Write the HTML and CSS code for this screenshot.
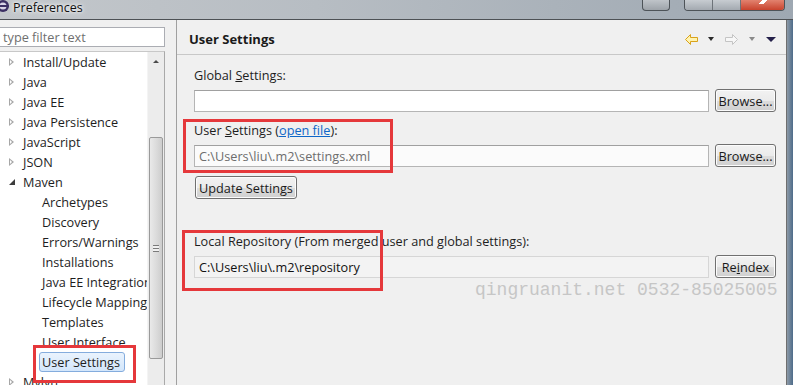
FILE: index.html
```html
<!DOCTYPE html>
<html lang="en">
<head>
  <meta charset="UTF-8">
  <title>Preferences</title>
  <link rel="stylesheet" href="styles.css">
</head>
<body>
<div class="window">
  <div class="titlebar">
    <svg class="app-icon" width="10" height="14" viewBox="0 0 10 14">
      <circle cx="3" cy="6" r="6" fill="#3b2f63"/>
      <circle cx="3" cy="6" r="3.5" fill="#d8d4e6"/>
      <rect x="-3" y="5" width="12" height="2" fill="#3b2f63"/>
    </svg>
    <span class="title">Preferences</span>
    <div class="caption">
      <span class="cap cap-extra"></span>
      <span class="cap-group">
        <span class="cap cap-min"></span>
        <span class="cap cap-max"></span>
        <span class="cap cap-close"><span class="x-mark"></span></span>
      </span>
    </div>
  </div>

  <div class="main">
    <aside class="sidebar">
      <input class="filter" type="text" placeholder="type filter text">
      <div class="tree">
        <ul class="tree-list">
          <li class="node"><span class="twisty"></span>Install/Update</li>
          <li class="node"><span class="twisty"></span>Java</li>
          <li class="node"><span class="twisty"></span>Java EE</li>
          <li class="node"><span class="twisty"></span>Java Persistence</li>
          <li class="node"><span class="twisty"></span>JavaScript</li>
          <li class="node"><span class="twisty"></span>JSON</li>
          <li class="node"><span class="twisty open"></span>Maven</li>
          <li class="leaf">Archetypes</li>
          <li class="leaf">Discovery</li>
          <li class="leaf">Errors/Warnings</li>
          <li class="leaf">Installations</li>
          <li class="leaf">Java EE Integration</li>
          <li class="leaf">Lifecycle Mapping</li>
          <li class="leaf">Templates</li>
          <li class="leaf">User Interface</li>
          <li class="leaf"><span class="selected">User Settings</span></li>
          <li class="node"><span class="twisty"></span>Mylyn</li>
        </ul>
        <div class="scrollbar">
          <span class="arrow-up"></span>
          <div class="thumb"><span class="grip"></span></div>
        </div>
      </div>
    </aside>

    <main class="page">
      <header class="page-head">
        <h1>User Settings</h1>
        <div class="nav">
          <svg width="13" height="11" viewBox="0 0 13 11"><path d="M0.5 5.5 L5.5 0.5 L5.5 3.5 L12.5 3.5 L12.5 7.5 L5.5 7.5 L5.5 10.5 Z" fill="#fff3b0" stroke="#d9a21b"/></svg>
          <span class="drop dark"></span>
          <svg class="fwd" width="13" height="11" viewBox="0 0 13 11"><path d="M12.5 5.5 L7.5 0.5 L7.5 3.5 L0.5 3.5 L0.5 7.5 L7.5 7.5 L7.5 10.5 Z" fill="#f7f7f7" stroke="#c4c4c4"/></svg>
          <span class="drop grey"></span>
          <span class="drop menu"></span>
        </div>
      </header>

      <div class="page-body">
        <label class="field-label">Global <u>S</u>ettings:</label>
        <div class="field-row">
          <input class="text" type="text">
          <button class="btn">Browse...</button>
        </div>

        <label class="field-label gap-s">User <u>S</u>ettings (<a href="#">open file</a>):</label>
        <div class="field-row">
          <input class="text muted" type="text" value="C:\Users\liu\.m2\settings.xml">
          <button class="btn">Browse...</button>
        </div>
        <button class="btn btn-update">Update Settings</button>

        <label class="field-label gap-l">Local Repository (From merged user and global settings):</label>
        <div class="field-row">
          <input class="text readonly" type="text" value="C:\Users\liu\.m2\repository" readonly>
          <button class="btn">Re<u>i</u>ndex</button>
        </div>
      </div>
    </main>
    <div class="frame-edge"></div>
  </div>

  <div class="watermark">qingruanit.net 0532-85025005</div>
  <div class="mark mark-user"></div>
  <div class="mark mark-repo"></div>
  <div class="mark mark-tree"></div>
</div>
</body>
</html>
```

FILE: styles.css
```css
body {
  margin: 0;
  font-family: "Open Sans", "Liberation Sans", sans-serif;
  font-size: 12.7px;
  color: #1e1e1e;
  overflow: hidden;
}

.window {
  position: relative;
  width: 793px;
  height: 385px;
  display: flex;
  flex-direction: column;
  background: #f0f0f0;
  overflow: hidden;
}

/* title bar */
.titlebar {
  height: 19px;
  display: flex;
  align-items: flex-start;
  background: linear-gradient(90deg, #c3c7cb 0%, #b7bdc3 40%, #aab2ba 70%, #9ea8b2 100%);
  border-bottom: 1px solid #4d5155;
  flex-shrink: 0;
}

.title {
  margin-left: 3px;
  line-height: 16px;
  font-size: 12.5px;
  color: #111;
  text-shadow: 0 0 6px #fff, 0 0 3px #fff;
}

.caption {
  margin-left: auto;
  display: flex;
  align-items: flex-start;
  margin-right: 8px;
}

.cap {
  display: block;
  height: 10px;
}

.cap-extra {
  width: 26px;
  margin-right: 14px;
  border: 1px solid #4d5358;
  border-top: none;
  border-radius: 0 0 4px 4px;
  background: linear-gradient(#bfc4c9, #9da3a9);
}

.cap-group {
  display: flex;
  border: 1px solid #4d5358;
  border-top: none;
  border-radius: 0 0 4px 4px;
  overflow: hidden;
}

.cap-min,
.cap-max {
  width: 27px;
  background: linear-gradient(#c7ccd1, #a3a9b0);
  border-right: 1px solid #6d7379;
}

.cap-close {
  width: 43px;
  background: linear-gradient(#e2826f, #c8432e);
  display: flex;
  justify-content: center;
}

.x-mark {
  width: 10px;
  height: 4px;
  background: linear-gradient(135deg, transparent 35%, #fff 35%, #fff 65%, transparent 65%);
}

/* main area */
.main {
  flex: 1;
  display: flex;
  min-height: 0;
}

.sidebar {
  width: 176px;
  flex-shrink: 0;
  display: flex;
  flex-direction: column;
  padding-top: 7px;
  box-sizing: border-box;
}

.filter {
  width: 165px;
  height: 20px;
  box-sizing: border-box;
  margin: 0 0 4px 0;
  padding: 0 3px;
  border: 1px solid #abadb3;
  border-left: none;
  font: inherit;
  background: #fff;
  outline: none;
}

.filter::placeholder {
  color: #6f6f6f;
}

.tree {
  width: 165px;
  flex: 1;
  display: flex;
  background: #fff;
  border-top: 1px solid #c8c8c8;
  border-right: 1px solid #a9a9a9;
  box-sizing: border-box;
  min-height: 0;
}

.tree-list {
  list-style: none;
  margin: 0;
  padding: 0;
  flex: 1;
  overflow: hidden;
  white-space: nowrap;
}

.tree-list li {
  height: 20px;
  line-height: 20px;
  display: flex;
  align-items: center;
}

.node {
  padding-left: 9px;
}

.leaf {
  padding-left: 42px;
}

.twisty {
  width: 0;
  height: 0;
  margin-right: 9px;
  border-top: 4px solid transparent;
  border-bottom: 4px solid transparent;
  border-left: 5px solid #a6a6a6;
  position: relative;
}

.twisty::after {
  content: "";
  position: absolute;
  left: -4px;
  top: -2px;
  border-top: 2px solid transparent;
  border-bottom: 2px solid transparent;
  border-left: 2px solid #fff;
}

.twisty.open {
  border: none;
  width: 0;
  height: 0;
  border-bottom: 6px solid #3c3c3c;
  border-left: 6px solid transparent;
  margin-right: 8px;
}

.twisty.open::after {
  display: none;
}

.selected {
  margin-left: -3px;
  padding: 0 4px 0 2px;
  line-height: 18px;
  border: 1px solid #84acdd;
  border-radius: 3px;
  background: linear-gradient(#eaf3fd, #d3e6fb);
}

.scrollbar {
  width: 16px;
  flex-shrink: 0;
  background: #ececec;
  border-left: 1px solid #f4f4f4;
  display: flex;
  flex-direction: column;
  align-items: center;
}

.arrow-up {
  margin-top: 8px;
  width: 0;
  height: 0;
  border-left: 3px solid transparent;
  border-right: 3px solid transparent;
  border-bottom: 3px solid #4a4a4a;
}

.thumb {
  margin-top: 74px;
  width: 14px;
  height: 222px;
  box-sizing: border-box;
  border: 1px solid #9a9a9a;
  border-radius: 2px;
  background: linear-gradient(90deg, #e9e9e9, #dcdcdc 50%, #cdcdcd);
  display: flex;
  align-items: center;
  justify-content: center;
}

.grip {
  width: 6px;
  height: 5px;
  border-top: 1px solid #7a7a7a;
  border-bottom: 1px solid #7a7a7a;
  background: linear-gradient(#f0f0f0 40%, #7a7a7a 40%, #7a7a7a 60%, #f0f0f0 60%);
}

/* right page */
.page {
  flex: 1;
  border-left: 1px solid #a0a0a0;
  display: flex;
  flex-direction: column;
}

.page-head {
  height: 35px;
  border-bottom: 1px solid #c8c8c8;
  display: flex;
  align-items: center;
  padding: 4px 10px 0 12px;
  box-sizing: border-box;
}

.page-head h1 {
  margin: 0;
  font-size: 13px;
  font-weight: 700;
  color: #1a1a1a;
}

.nav {
  margin-left: auto;
  display: flex;
  align-items: center;
}

.drop {
  width: 0;
  height: 0;
  border-left: 3px solid transparent;
  border-right: 3px solid transparent;
  border-top: 4px solid #2a2a2a;
  margin-left: 10px;
}

.drop.grey {
  border-top-color: #8a8a8a;
  margin-left: 11px;
}

.drop.menu {
  border-left-width: 5px;
  border-right-width: 5px;
  border-top: 5px solid #24204a;
  margin-left: 11px;
}

.fwd {
  margin-left: 11px;
}

.page-body {
  padding: 13px 10px 0 17px;
  display: flex;
  flex-direction: column;
  align-items: flex-start;
}

.field-label {
  line-height: 14px;
  margin-bottom: 7px;
  white-space: nowrap;
}

.field-label a {
  color: #0e66c8;
}

.gap-s {
  margin-top: 11px;
}

.gap-l {
  margin-top: 35px;
}

.field-row {
  width: 100%;
  display: flex;
  align-items: center;
  gap: 6px;
}

.text {
  flex: 1;
  height: 22px;
  box-sizing: border-box;
  border: 1px solid #b5b5b5;
  border-top-color: #a0a0a0;
  padding: 0 4px;
  font: inherit;
  background: #fff;
  outline: none;
}

.text.muted {
  color: #6d6d6d;
  background: #fbfbfb;
}

.text.readonly {
  background: #f3f3f3;
  border-color: #d6d6d6;
  color: #111;
}

.btn {
  width: 61px;
  height: 23px;
  box-sizing: border-box;
  padding: 0;
  font: inherit;
  color: #1a1a1a;
  border: 1px solid #707070;
  border-radius: 3px;
  background: linear-gradient(#f2f2f2 0%, #ebebeb 50%, #dddddd 51%, #cfcfcf 100%);
  box-shadow: inset 0 0 0 1px #fcfcfc;
}

.btn-update {
  width: 102px;
  margin-top: 9px;
  margin-left: 1px;
}

.frame-edge {
  width: 6px;
  flex-shrink: 0;
  border-left: 1px solid #6e6e6e;
  background: linear-gradient(90deg, #8c99a6, #4e6c8a);
}

/* overlays */
.watermark {
  position: absolute;
  left: 475px;
  top: 279px;
  font-family: "Liberation Mono", monospace;
  font-size: 18px;
  line-height: 22px;
  color: #c6c6c6;
  white-space: nowrap;
}

.mark {
  position: absolute;
  border: 3px solid #e5383b;
  box-sizing: border-box;
}

.mark-user {
  left: 183px;
  top: 119px;
  width: 210px;
  height: 54px;
}

.mark-repo {
  left: 182px;
  top: 230px;
  width: 201px;
  height: 61px;
}

.mark-tree {
  left: 33px;
  top: 345px;
  width: 103px;
  height: 38px;
}
```
